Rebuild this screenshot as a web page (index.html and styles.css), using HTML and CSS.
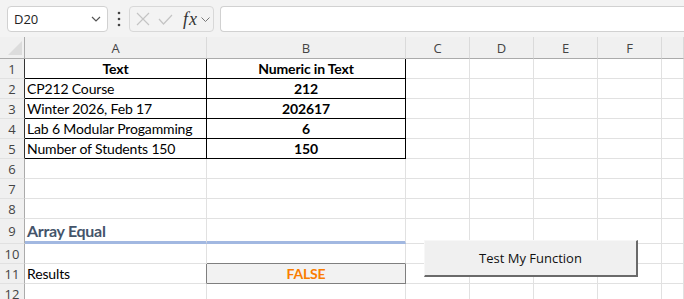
FILE: index.html
```html
<!DOCTYPE html>
<html lang="en">
<head>
  <meta charset="UTF-8">
  <meta name="viewport" content="width=device-width, initial-scale=1.0">
  <title>Array Equal</title>
  <link rel="stylesheet" href="styles.css">
</head>
<body>
  <div class="formula-bar">
    <div class="name-box">
      <span>D20</span>
      <svg class="chev" width="10" height="6" viewBox="0 0 10 6"><path d="M1 1 L5 5 L9 1" fill="none" stroke="#555" stroke-width="1.2"/></svg>
    </div>
    <div class="grip">
      <svg width="4" height="16" viewBox="0 0 4 16"><circle cx="2" cy="2" r="1.3" fill="#444"/><circle cx="2" cy="8" r="1.3" fill="#444"/><circle cx="2" cy="14" r="1.3" fill="#444"/></svg>
    </div>
    <div class="fx-box">
      <svg width="14" height="14" viewBox="0 0 14 14"><path d="M1 1 L13 13 M13 1 L1 13" stroke="#c4c4c4" stroke-width="1.2"/></svg>
      <svg width="15" height="11" viewBox="0 0 15 11"><path d="M1 5 L5.5 10 L14 1" fill="none" stroke="#c4c4c4" stroke-width="1.2"/></svg>
      <span class="fx">fx</span>
      <svg width="9" height="5" viewBox="0 0 9 5"><path d="M0.5 0.5 L4.5 4.5 L8.5 0.5" fill="none" stroke="#777" stroke-width="1"/></svg>
    </div>
    <div class="formula-input"></div>
  </div>

  <div class="sheet">
    <div class="row hdr-row">
      <div class="cell corner"><svg width="14" height="14" viewBox="0 0 14 14"><polygon points="14,0 14,14 0,14" fill="#dcdcdc"/></svg></div>
      <div class="cell">A</div><div class="cell">B</div><div class="cell">C</div><div class="cell">D</div><div class="cell">E</div><div class="cell">F</div><div class="cell"></div>
    </div>

    <div class="row">
      <div class="cell rh edge">1</div>
      <div class="cell tb center bold">Text</div><div class="cell tb center bold">Numeric in Text</div>
      <div class="cell"></div><div class="cell"></div><div class="cell"></div><div class="cell"></div><div class="cell"></div>
    </div>
    <div class="row">
      <div class="cell rh edge">2</div>
      <div class="cell tb">CP212 Course</div><div class="cell tb center bold">212</div>
      <div class="cell"></div><div class="cell"></div><div class="cell"></div><div class="cell"></div><div class="cell"></div>
    </div>
    <div class="row">
      <div class="cell rh edge">3</div>
      <div class="cell tb">Winter 2026, Feb 17</div><div class="cell tb center bold">202617</div>
      <div class="cell"></div><div class="cell"></div><div class="cell"></div><div class="cell"></div><div class="cell"></div>
    </div>
    <div class="row">
      <div class="cell rh edge">4</div>
      <div class="cell tb">Lab 6 Modular Progamming</div><div class="cell tb center bold">6</div>
      <div class="cell"></div><div class="cell"></div><div class="cell"></div><div class="cell"></div><div class="cell"></div>
    </div>
    <div class="row">
      <div class="cell rh edge">5</div>
      <div class="cell tb">Number of Students 150</div><div class="cell tb center bold">150</div>
      <div class="cell"></div><div class="cell"></div><div class="cell"></div><div class="cell"></div><div class="cell"></div>
    </div>
    <div class="row">
      <div class="cell rh">6</div>
      <div class="cell"></div><div class="cell"></div><div class="cell"></div><div class="cell"></div><div class="cell"></div><div class="cell"></div><div class="cell"></div>
    </div>
    <div class="row">
      <div class="cell rh">7</div>
      <div class="cell"></div><div class="cell"></div><div class="cell"></div><div class="cell"></div><div class="cell"></div><div class="cell"></div><div class="cell"></div>
    </div>
    <div class="row">
      <div class="cell rh">8</div>
      <div class="cell"></div><div class="cell"></div><div class="cell"></div><div class="cell"></div><div class="cell"></div><div class="cell"></div><div class="cell"></div>
    </div>
    <div class="row tall">
      <div class="cell rh">9</div>
      <div class="cell heading">Array Equal</div><div class="cell heading"></div>
      <div class="cell"></div><div class="cell"></div><div class="cell"></div><div class="cell"></div><div class="cell"></div>
    </div>
    <div class="row">
      <div class="cell rh">10</div>
      <div class="cell"></div><div class="cell calc-top"></div>
      <div class="cell"></div><div class="cell"></div><div class="cell"></div><div class="cell"></div><div class="cell"></div>
    </div>
    <div class="row">
      <div class="cell rh">11</div>
      <div class="cell calc-left">Results</div><div class="cell calc">FALSE</div>
      <div class="cell"></div><div class="cell"></div><div class="cell"></div><div class="cell"></div><div class="cell"></div>
    </div>
    <div class="row last">
      <div class="cell rh">12</div>
      <div class="cell"></div><div class="cell"></div><div class="cell"></div><div class="cell"></div><div class="cell"></div><div class="cell"></div><div class="cell"></div>
    </div>

    <button class="macro-btn">Test My Function</button>
  </div>
</body>
</html>
```

FILE: styles.css
```css
* {
  box-sizing: border-box;
}
body {
  margin: 0;
  width: 684px;
  height: 299px;
  overflow: hidden;
  background: #fff;
  font-family: Lato, "Liberation Sans", sans-serif;
}
.formula-bar {
  height: 37px;
  background: #f3f3f3;
  display: flex;
  align-items: flex-start;
  padding-top: 6px;
}
.name-box {
  margin-left: 7px;
  width: 101px;
  height: 26px;
  background: #fff;
  border: 1px solid #d1d1d1;
  border-radius: 4px;
  display: flex;
  align-items: center;
  justify-content: space-between;
  padding: 0 6px 0 6px;
  font-family: "Open Sans", sans-serif;
  font-size: 13px;
  color: #222;
}
.grip {
  width: 21px;
  height: 26px;
  display: flex;
  align-items: center;
  justify-content: center;
}
.fx-box {
  width: 85px;
  height: 26px;
  border: 1px solid #d8d8d8;
  border-radius: 4px;
  display: flex;
  align-items: center;
  padding-left: 6px;
  gap: 8px;
}
.fx {
  font-family: "Liberation Serif", serif;
  font-style: italic;
  font-size: 18px;
  color: #333;
  margin-left: 2px;
  margin-right: -5px;
  letter-spacing: 1px;
}
.formula-input {
  margin-left: 6px;
  flex: 1;
  height: 26px;
  background: #fff;
  border: 1px solid #d1d1d1;
  border-right: none;
  border-radius: 4px 0 0 4px;
}
.sheet {
  position: relative;
}
.row {
  display: grid;
  grid-template-columns: 25px 182px 199px 64px 64px 64px 64px 1fr;
  height: 20px;
}
.row.tall {
  height: 25px;
}
.row.last .rh {
  align-items: flex-start;
  padding-top: 1px;
}
.cell {
  border-right: 1px solid #e1e1e1;
  border-bottom: 1px solid #e1e1e1;
  display: flex;
  align-items: center;
  padding: 0 2px;
  font-size: 14px;
  letter-spacing: -0.15px;
  color: #000;
  white-space: nowrap;
  overflow: hidden;
}
.hdr-row {
  height: 22px;
  background: #f0f0f0;
}
.hdr-row .cell {
  border-right-color: #dadada;
  border-bottom-color: #ababab;
  justify-content: center;
  font-family: "Open Sans", sans-serif;
  font-size: 13px;
  letter-spacing: 0;
  color: #444;
}
.hdr-row .corner {
  border-right-color: #ababab;
  justify-content: flex-end;
  align-items: flex-end;
  padding: 0 2px 3px 0;
}
.rh {
  background: #f0f0f0;
  border-right-color: #ababab;
  justify-content: center;
  font-family: "Open Sans", sans-serif;
  font-size: 13px;
  letter-spacing: 0;
  color: #444;
  padding: 0;
}
.rh.edge {
  border-right-color: #333;
}
.tb {
  border-right-color: #000;
  border-bottom-color: #000;
}
.center {
  justify-content: center;
}
.bold {
  font-weight: bold;
}
.heading {
  font-size: 16px;
  letter-spacing: -0.3px;
  font-weight: bold;
  color: #44546a;
  border-bottom: 3px solid #a2b8e1;
  padding-top: 1px;
}
.calc-top {
  border-bottom-color: #7f7f7f;
}
.calc-left {
  border-right-color: #7f7f7f;
}
.calc {
  background: #f2f2f2;
  border-right-color: #7f7f7f;
  border-bottom-color: #7f7f7f;
  justify-content: center;
  font-weight: bold;
  color: #fa7d00;
}
.macro-btn {
  position: absolute;
  left: 424px;
  top: 203px;
  width: 214px;
  height: 37px;
  background: #f0f0f0;
  border-top: 1px solid #f7f7f7;
  border-left: 1px solid #f7f7f7;
  border-right: 2px solid #6a6a6a;
  border-bottom: 2px solid #6a6a6a;
  border-radius: 0;
  padding: 0;
  font-family: "Open Sans", sans-serif;
  font-size: 13px;
  color: #111;
}
```
